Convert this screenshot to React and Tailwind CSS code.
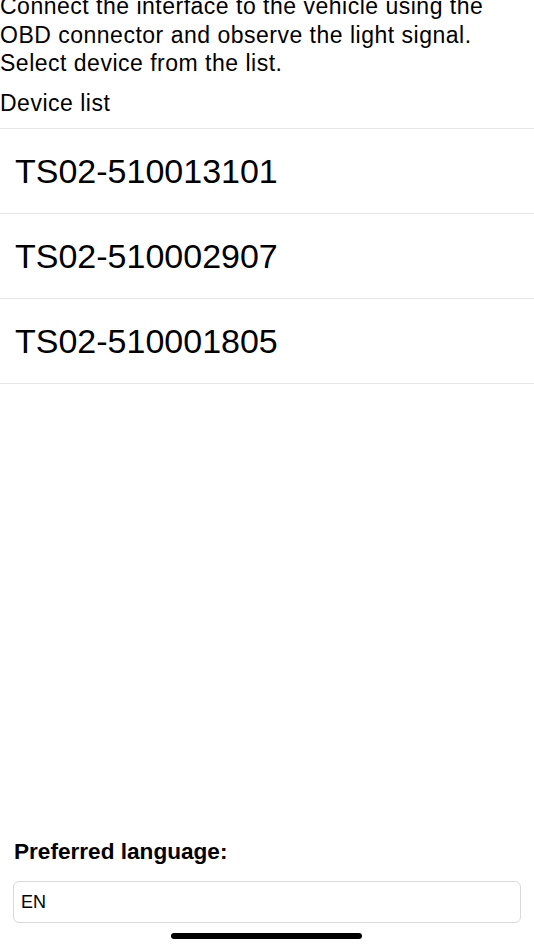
export default function App() {
  const devices = ["TS02-510013101", "TS02-510002907", "TS02-510001805"];
  return (
    <div
      className="relative h-[950px] w-[534px] overflow-hidden bg-white text-black flex flex-col"
      style={{ fontFamily: '"Liberation Sans", Arial, sans-serif' }}
    >
      <p className="mt-[-8px] text-[23px] leading-[28.6px] tracking-[0.5px] whitespace-nowrap">
        Connect the interface to the vehicle using the
        <br />
        OBD connector and observe the light signal.
        <br />
        Select device from the list.
      </p>
      <div className="mt-[11px] text-[23px] leading-[28.6px] tracking-[0.5px] pb-[11px]">Device list</div>
      <ul className="border-t border-[#e6e6e6]">
        {devices.map((d) => (
          <li
            key={d}
            className="h-[85px] flex items-center pl-[15px] border-b border-[#e6e6e6] text-[34px]"
          >
            {d}
          </li>
        ))}
      </ul>
      <div className="flex-1" />
      <div className="px-[13px] pb-[27px]">
        <div className="pl-px text-[22.6px] font-bold leading-[28px] mb-[15px] mt-[-1px]">Preferred language:</div>
        <div className="h-[42px] w-[508px] rounded-[6px] border border-[#d9d9d9] flex items-center pl-[7px] pt-px text-[18px]">
          EN
        </div>
      </div>
      <div className="absolute left-[171px] top-[933px] h-[6px] w-[191px] rounded-full bg-black" />
    </div>
  );
}
